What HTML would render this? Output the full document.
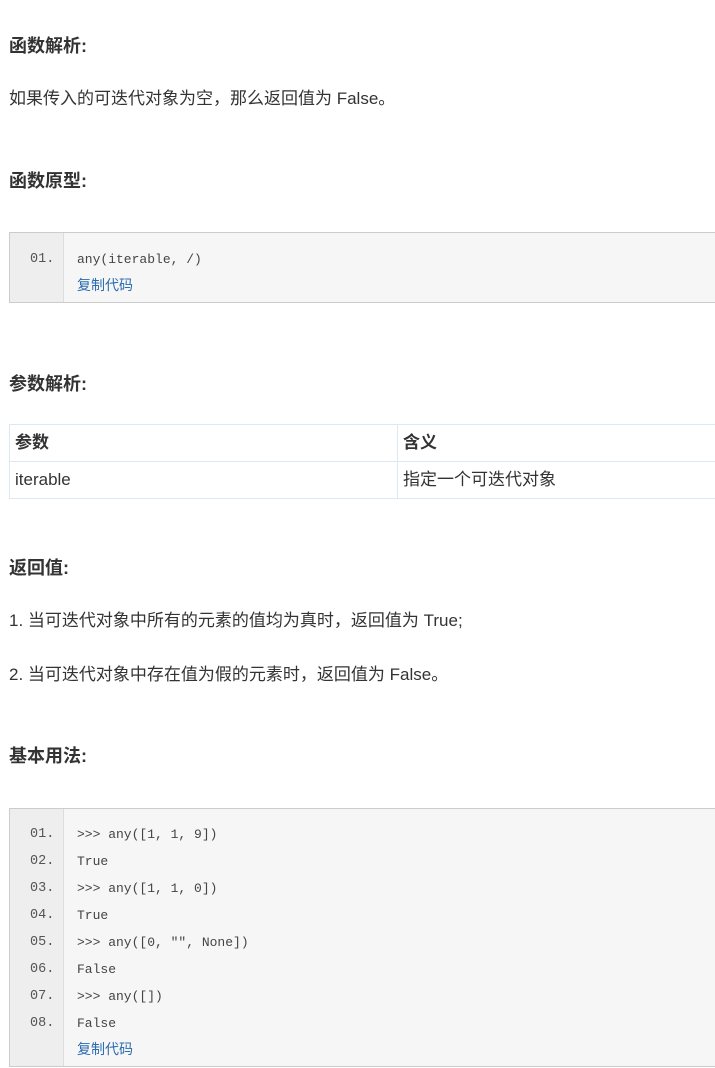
<!DOCTYPE html>
<html><head><meta charset="utf-8"><style>
body{margin:0;width:715px;height:1068px;overflow:hidden;background:#fff;font-family:"Liberation Sans","Noto Sans CJK SC",sans-serif;color:#333;position:relative}
h3{position:absolute;margin:0;font-size:18px;font-weight:bold;color:#333;left:9px;line-height:24px}
p{position:absolute;margin:0;font-size:17px;left:9px;line-height:24px;color:#333}
.code{position:absolute;left:9px;width:720px;border:1px solid #ccc;background:#f6f6f6}
.gut{position:absolute;left:0;top:0;bottom:0;width:53px;background:#eee;border-right:1px solid #ddd}
.ln{position:absolute;font-family:"Liberation Mono","DejaVu Sans Mono",monospace;font-size:13.5px;color:#555;line-height:18px}
.cl{position:absolute;left:67px;font-family:"Liberation Mono","DejaVu Sans Mono",monospace;font-size:13px;color:#444;line-height:18px}
.cp{position:absolute;left:67px;font-size:14px;color:#2a6cb0;line-height:18px}
table{position:absolute;left:9px;top:424px;width:720px;border-collapse:collapse;font-size:17px}
td{border:1px solid #dde9f2;height:36px;padding:0 5px;color:#333;line-height:24px;vertical-align:middle}
td span{display:inline-block;vertical-align:middle;line-height:24px}
</style></head><body>
<h3 style="top:34px">函数解析:</h3>
<p style="top:87px">如果传入的可迭代对象为空，那么返回值为 False。</p>
<h3 style="top:169px">函数原型:</h3>
<div class="code" style="top:232px;height:69px">
<div class="gut"></div>
<div class="ln" style="top:18px;left:20px">01.</div>
<div class="cl" style="top:18px">any(iterable, /)</div>
<div class="cp" style="top:43px">复制代码</div>
</div>
<h3 style="top:372px">参数解析:</h3>
<table><tr><td style="width:377px;font-weight:bold"><span>参数</span></td><td style="font-weight:bold"><span>含义</span></td></tr>
<tr><td><span>iterable</span></td><td><span>指定一个可迭代对象</span></td></tr></table>
<h3 style="top:556px">返回值:</h3>
<p style="top:609px">1. 当可迭代对象中所有的元素的值均为真时，返回值为 True;</p>
<p style="top:663px">2. 当可迭代对象中存在值为假的元素时，返回值为 False。</p>
<h3 style="top:744px">基本用法:</h3>
<div class="code" style="top:808px;height:257px">
<div class="gut"></div>
<div class="ln" style="top:17px;left:20px">01.</div><div class="cl" style="top:17px">&gt;&gt;&gt; any([1, 1, 9])</div>
<div class="ln" style="top:44px;left:20px">02.</div><div class="cl" style="top:44px">True</div>
<div class="ln" style="top:71px;left:20px">03.</div><div class="cl" style="top:71px">&gt;&gt;&gt; any([1, 1, 0])</div>
<div class="ln" style="top:98px;left:20px">04.</div><div class="cl" style="top:98px">True</div>
<div class="ln" style="top:125px;left:20px">05.</div><div class="cl" style="top:125px">&gt;&gt;&gt; any([0, "", None])</div>
<div class="ln" style="top:152px;left:20px">06.</div><div class="cl" style="top:152px">False</div>
<div class="ln" style="top:179px;left:20px">07.</div><div class="cl" style="top:179px">&gt;&gt;&gt; any([])</div>
<div class="ln" style="top:206px;left:20px">08.</div><div class="cl" style="top:206px">False</div>
<div class="cp" style="top:231px">复制代码</div>
</div>
</body></html>
